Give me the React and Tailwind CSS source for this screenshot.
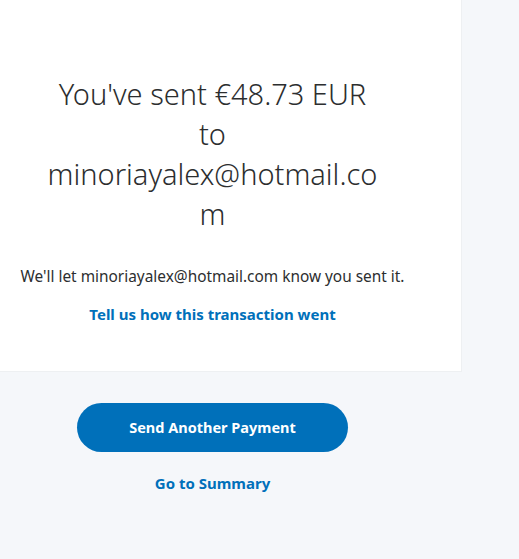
export default function App() {
  return (
    <div className="min-h-[559px] w-[519px] bg-[#f5f7fa] overflow-hidden" style={{ fontFamily: '"Noto Sans", "Open Sans", sans-serif' }}>
      <div className="w-[462px] bg-white pt-[74px] pb-[47px] pr-[37px] border-r border-b border-[#eef0f2]">
        <div className="w-[425px] flex flex-col items-center">
          <h1 className="w-[335px] text-center text-[29px] leading-[40px] font-light text-[#2c2e2f] [overflow-wrap:anywhere]">
            You've sent €48.73 EUR to minoriayalex@hotmail.com
          </h1>
          <p className="mt-[33px] text-[15.4px] leading-[20px] text-[#2c2e2f]">
            We'll let minoriayalex@hotmail.com know you sent it.
          </p>
          <a className="mt-[17px] text-[15px] leading-[20px] font-bold text-[#0070ba]">
            Tell us how this transaction went
          </a>
        </div>
      </div>
      <div className="w-[425px] flex flex-col items-center">
        <button className="mt-[31px] w-[271px] h-[49px] rounded-full bg-[#0070ba] text-white text-[14.5px] font-bold">
          Send Another Payment
        </button>
        <a className="mt-[21px] text-[15px] leading-[20px] font-bold text-[#0070ba]">
          Go to Summary
        </a>
      </div>
    </div>
  );
}
